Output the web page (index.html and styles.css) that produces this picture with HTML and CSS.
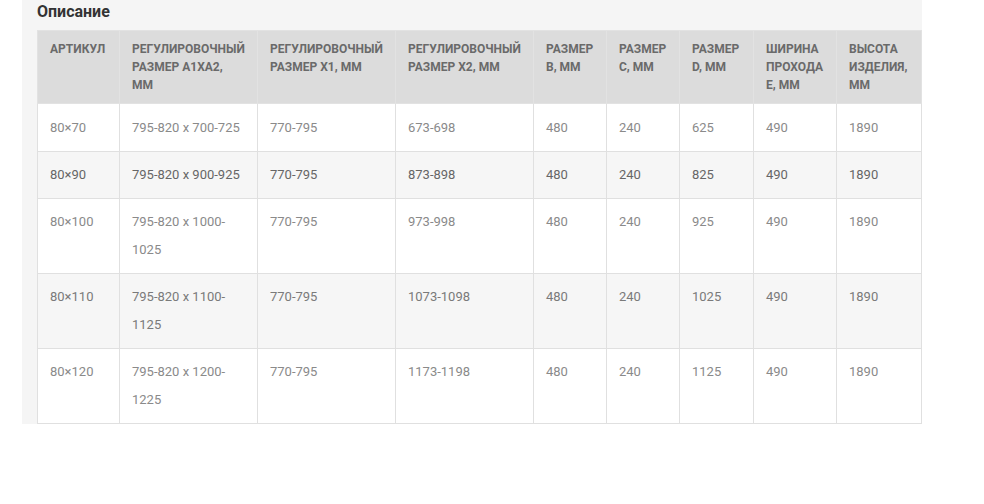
FILE: index.html
```html
<!DOCTYPE html>
<html lang="ru">
<head>
<meta charset="utf-8">
<title>Описание</title>
<link rel="stylesheet" href="styles.css">
</head>
<body>
<div class="page">
  <div class="panel">
    <h2 class="title">Описание</h2>
    <table class="spec">
      <colgroup>
        <col class="c1"><col class="c2"><col class="c3"><col class="c4"><col class="c5"><col class="c6"><col class="c7"><col class="c8"><col class="c9">
      </colgroup>
      <thead>
        <tr>
          <th>Артикул</th>
          <th>Регулировочный размер A1xA2, мм</th>
          <th>Регулировочный размер X1, мм</th>
          <th>Регулировочный размер X2, мм</th>
          <th>Размер B, мм</th>
          <th>Размер C, мм</th>
          <th>Размер D, мм</th>
          <th>Ширина прохода E, мм</th>
          <th>Высота изделия, мм</th>
        </tr>
      </thead>
      <tbody>
        <tr><td>80×70</td><td>795-820 x 700-725</td><td>770-795</td><td>673-698</td><td>480</td><td>240</td><td>625</td><td>490</td><td>1890</td></tr>
        <tr class="alt dark"><td>80×90</td><td>795-820 x 900-925</td><td>770-795</td><td>873-898</td><td>480</td><td>240</td><td>825</td><td>490</td><td>1890</td></tr>
        <tr><td>80×100</td><td>795-820 x 1000-1025</td><td>770-795</td><td>973-998</td><td>480</td><td>240</td><td>925</td><td>490</td><td>1890</td></tr>
        <tr class="alt"><td>80×110</td><td>795-820 x 1100-1125</td><td>770-795</td><td>1073-1098</td><td>480</td><td>240</td><td>1025</td><td>490</td><td>1890</td></tr>
        <tr><td>80×120</td><td>795-820 x 1200-1225</td><td>770-795</td><td>1173-1198</td><td>480</td><td>240</td><td>1125</td><td>490</td><td>1890</td></tr>
      </tbody>
    </table>
  </div>
</div>
</body>
</html>
```

FILE: styles.css
```css
html, body {
  margin: 0;
  padding: 0;
  background: #ffffff;
  font-family: Roboto, "Liberation Sans", Arial, sans-serif;
}

.page {
  min-height: 504px;
  padding-left: 22px;
}

.panel {
  width: 870px;
  padding: 0 15px;
  background: #f5f5f5;
}

.title {
  margin: 0 0 6px 0;
  font-size: 16px;
  line-height: 24px;
  font-weight: 700;
  color: #333333;
}

.spec {
  width: 885px;
  margin-bottom: -8px;
  table-layout: fixed;
  border-collapse: collapse;
  background: #ffffff;
}

.c1 { width: 82px; }
.c2 { width: 138px; }
.c3 { width: 138px; }
.c4 { width: 138px; }
.c5 { width: 73px; }
.c6 { width: 73px; }
.c7 { width: 74px; }
.c8 { width: 83px; }
.c9 { width: 85px; }

.spec th,
.spec td {
  border: 1px solid #e0e0e0;
  text-align: left;
  vertical-align: top;
  padding: 9px 12px 9px 12px;
}

.spec th {
  background: #dcdcdc;
  border-color: #e2e2e2;
  color: #6a6a6a;
  font-size: 12px;
  line-height: 18px;
  font-weight: 700;
  text-transform: uppercase;
}

.spec td {
  color: #8a8a8a;
  font-size: 13px;
  line-height: 28px;
}

.spec tbody tr:first-child td {
  padding-top: 10px;
}

.spec tr.alt td {
  background: #f6f6f6;
  color: #7a7a7a;
}

.spec tr.dark td {
  color: #666666;
}
```
